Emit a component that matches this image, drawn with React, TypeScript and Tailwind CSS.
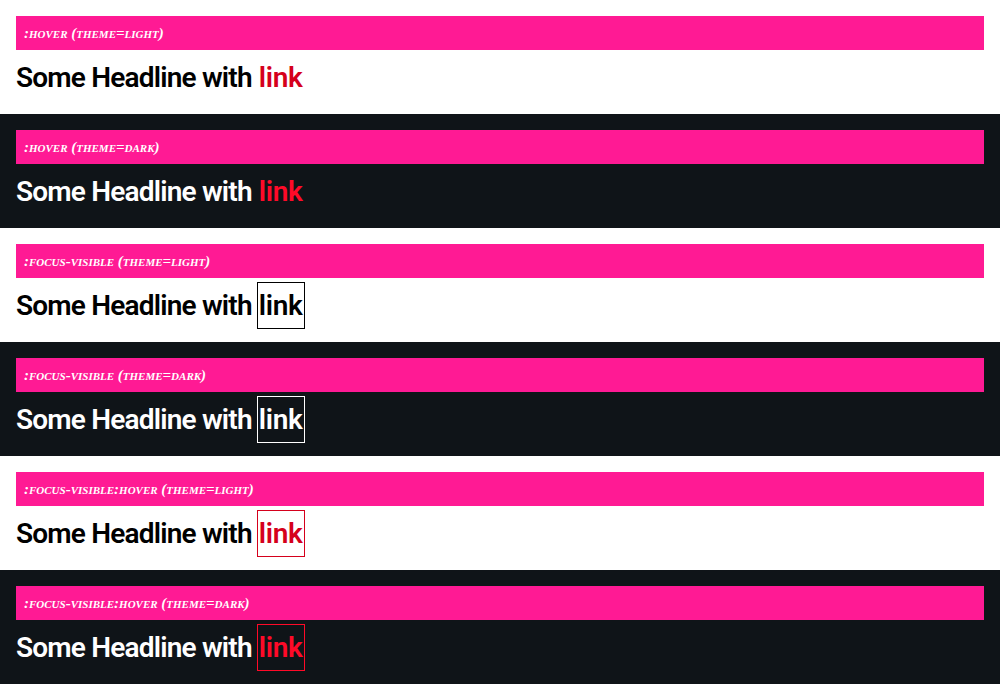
import React from 'react';

type Row = { label: string; dark: boolean; hover: boolean; focus: boolean };

const rows: Row[] = [
  { label: ':hover (theme=light)', dark: false, hover: true, focus: false },
  { label: ':hover (theme=dark)', dark: true, hover: true, focus: false },
  { label: ':focus-visible (theme=light)', dark: false, hover: false, focus: true },
  { label: ':focus-visible (theme=dark)', dark: true, hover: false, focus: true },
  { label: ':focus-visible:hover (theme=light)', dark: false, hover: true, focus: true },
  { label: ':focus-visible:hover (theme=dark)', dark: true, hover: true, focus: true },
];

const Section: React.FC<{ row: Row }> = ({ row }) => {
  const base = row.dark ? 'text-white' : 'text-black';
  let link = base;
  let box = 'border-transparent';
  if (row.hover) link = row.dark ? 'text-[#ff0a28]' : 'text-[#d5001c]';
  if (row.focus) {
    if (row.hover) box = row.dark ? 'border-[#ff0a28]' : 'border-[#d5001c]';
    else box = row.dark ? 'border-white' : 'border-black';
  }
  return (
    <section className={`h-[114px] px-4 pt-4 ${row.dark ? 'bg-[#0f1418]' : 'bg-white'}`}>
      <div className="h-[34px] bg-[#ff1a94] px-2 flex items-center">
        <span className="text-white italic font-bold text-[15px] [font-family:'Liberation_Serif',serif] [font-variant:small-caps]">
          {row.label}
        </span>
      </div>
      <h2 className={`mt-1 h-[47px] flex items-center text-[28px] font-semibold tracking-[-0.8px] [font-family:'Roboto',sans-serif] ${base}`}>
        <span>Some Headline with</span>
        <a href="#" className={`ml-[5px] h-[47px] px-[1px] border flex items-center tracking-[-0.3px] ${box} ${link}`}>link</a>
      </h2>
    </section>
  );
};

export default function App() {
  return (
    <div className="w-[1000px]">
      {rows.map(r => (
        <Section key={r.label} row={r} />
      ))}
    </div>
  );
}
